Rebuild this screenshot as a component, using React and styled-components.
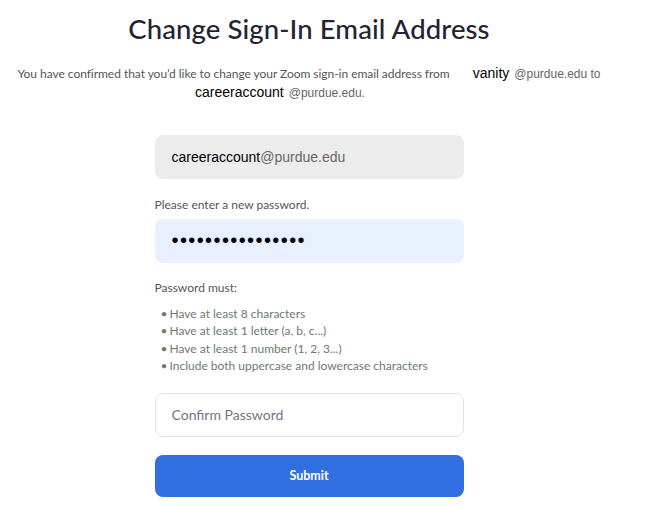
import styled, { createGlobalStyle } from "styled-components";

const GlobalStyle = createGlobalStyle`
  body {
    margin: 0;
    background: #ffffff;
    font-family: Lato, "Open Sans", sans-serif;
  }
`;

const Page = styled.div`
  width: 618px;
  display: flex;
  flex-direction: column;
  align-items: center;
  padding-top: 11px;
`;

const Title = styled.h1`
  margin: 0;
  font-family: Lato, sans-serif;
  font-weight: 500;
  font-size: 27.5px;
  line-height: 36px;
  color: #232333;
  letter-spacing: 0.1px;
`;

const Intro = styled.div`
  margin-top: 18px;
  display: flex;
  flex-direction: column;
  align-items: center;
  font-size: 12px;
  color: #555555;
`;

const IntroLine = styled.div`
  display: flex;
  align-items: baseline;
  height: ${(p) => p.$height || 18}px;
  padding-right: ${(p) => p.$pull || 0}px;
  letter-spacing: ${(p) => p.$tight || 0}px;
`;

const Plain = styled.span`
  font-family: "Liberation Sans", Arial, sans-serif;
  font-size: 14px;
  letter-spacing: 0;
  color: #000000;
  margin: ${(p) => p.$margin || "0"};
`;

const Domain = styled.span`
  font-family: "Liberation Sans", Arial, sans-serif;
  font-size: ${(p) => p.$size || 12}px;
  letter-spacing: 0;
  color: #666666;
`;

const Form = styled.div`
  margin-top: 33px;
  width: 309px;
  display: flex;
  flex-direction: column;
`;

const Field = styled.div`
  height: 44px;
  box-sizing: border-box;
  border-radius: 8px;
  display: flex;
  align-items: center;
  padding-left: 16px;
  margin-top: ${(p) => p.$top || 0}px;
  background: ${(p) => p.$bg || "#ffffff"};
  border: 1px solid ${(p) => p.$border || "transparent"};
`;

const EmailText = styled.span`
  font-family: "Liberation Sans", Arial, sans-serif;
  font-size: 14px;
  color: #000000;
`;

const Dots = styled.span`
  font-family: "Liberation Sans", Arial, sans-serif;
  font-size: 20px;
  letter-spacing: 1.4px;
  color: #000000;
  margin-top: -2px;
`;

const Placeholder = styled.span`
  font-size: 14px;
  color: #747487;
`;

const Label = styled.div`
  font-size: 12px;
  color: #555555;
  margin: ${(p) => p.$margin};
`;

const Rules = styled.ul`
  margin: 10px 0 0;
  padding: 0 0 0 15px;
  list-style: none;
`;

const Rule = styled.li`
  position: relative;
  font-size: 12px;
  line-height: 17.4px;
  color: #6b7b6e;
  &::before {
    content: "•";
    position: absolute;
    left: -9px;
    color: #6b7b6e;
  }
`;

const Submit = styled.button`
  margin-top: 18px;
  height: 42px;
  border: none;
  border-radius: 8px;
  background: #2f6fe0;
  color: #ffffff;
  font-family: Lato, sans-serif;
  font-weight: 700;
  font-size: 12.5px;
`;

export default function App() {
  return (
    <>
      <GlobalStyle />
      <Page>
        <Title>Change Sign-In Email Address</Title>
        <Intro>
          <IntroLine $tight={-0.04} $height={19}>
            <span>
              You have confirmed that you’d like to change your Zoom sign-in
              email address from
            </span>
            <Plain $margin="0 5px 0 23px">vanity</Plain>
            <Domain>@purdue.edu to</Domain>
          </IntroLine>
          <IntroLine $pull={58}>
            <Plain $margin="0 5px 0 0">careeraccount</Plain>
            <Domain>@purdue.edu.</Domain>
          </IntroLine>
        </Intro>
        <Form>
          <Field $bg="#ececec">
            <EmailText>careeraccount</EmailText>
            <Domain $size={14}>@purdue.edu</Domain>
          </Field>
          <Label $margin="18px 0 7px">Please enter a new password.</Label>
          <Field $bg="#e8f0fe">
            <Dots>••••••••••••••••</Dots>
          </Field>
          <Label $margin="17px 0 0">Password must:</Label>
          <Rules>
            <Rule>Have at least 8 characters</Rule>
            <Rule>Have at least 1 letter (a, b, c...)</Rule>
            <Rule>Have at least 1 number (1, 2, 3...)</Rule>
            <Rule>Include both uppercase and lowercase characters</Rule>
          </Rules>
          <Field $border="#e3e3e3" $top={18}>
            <Placeholder>Confirm Password</Placeholder>
          </Field>
          <Submit>Submit</Submit>
        </Form>
      </Page>
    </>
  );
}
